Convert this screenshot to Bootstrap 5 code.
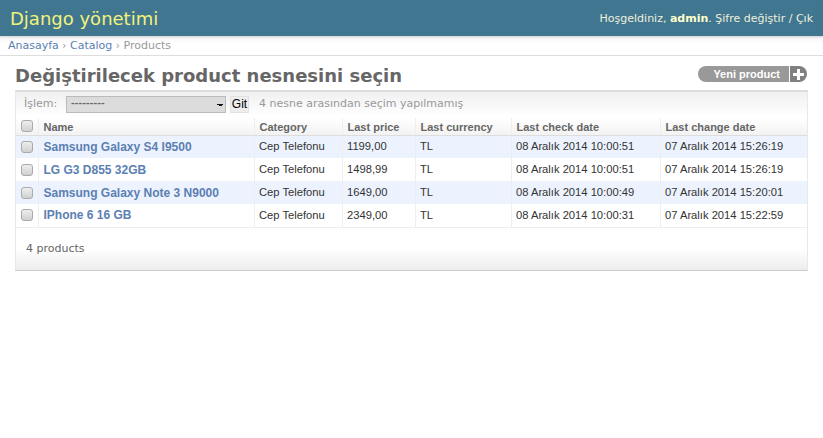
<!DOCTYPE html>
<html lang="tr">
<head>
  <meta charset="UTF-8">
  <meta name="viewport" content="width=device-width, initial-scale=1">
  <title>Değiştirilecek product nesnesini seçin - Django yönetimi</title>
  <link rel="stylesheet" href="https://cdn.jsdelivr.net/npm/bootstrap@5.3.3/dist/css/bootstrap.min.css">
  <style>
    body {
      background-color: #fff;
      color: #333;
      font-family: "DejaVu Sans", sans-serif;
      font-size: 11px;
    }
    a { text-decoration: none; color: #5b80b2; }

    .admin-top {
      height: 36px;
      background: #417690;
      padding: 1px 10px 0 10px;
      box-shadow: 0 1px 2px rgba(0,0,0,.15);
      position: relative;
    }
    .admin-brand { color: #f2f27a; font-size: 18px; font-weight: 400; line-height: 35px; }
    .admin-user { font-size: 11px; color: #eef0dc; padding-top: 2px; }
    .admin-user strong { color: #ffc; }
    .admin-user a { color: #eef0dc; }

    .crumbs {
      height: 20px;
      padding: 0 8px;
      font-size: 11px;
      line-height: 19px;
      color: #999;
      border-bottom: 1px solid #ddd;
      background: linear-gradient(#f4f4f4, #fff 8px);
    }
    .crumbs .sep { font-size: 10.500px; }

    .page-body { padding: 0 15px; }
    .page-head { height: 34px; }
    .page-title { font-size: 18px; font-weight: 700; color: #666; margin: 0 0 3px; }

    .add-link { height: 16px; margin: 0 1px 8px 0; font-family: "Liberation Sans", sans-serif; font-size: 11px; font-weight: 700; color: #fff; line-height: 16px; }
    .add-text { background: #999; width: 91px; padding-right: 9px; text-align: right; border-radius: 8px 0 0 8px; color: #fff; }
    .add-plus { background: #808080; width: 17px; margin-left: 1px; padding-left: 3px; border-radius: 0 8px 8px 0; }

    .result-box { border: 1px solid #e8e8e8; border-top: 2px solid #ddd; border-bottom-color: #ccc; }

    .action-bar {
      height: 26px;
      padding: 0 8px 2px;
      color: #999;
      font-size: 11px;
      background: linear-gradient(#f0f0f0, #fff 24px);
    }
    .action-bar label { width: 42px; }
    .action-pick {
      width: 160px;
      height: 17px;
      padding: 0 4px;
      margin-right: 4px;
      font-family: "DejaVu Sans", sans-serif;
      font-size: 9px;
      font-weight: 700;
      color: #666;
      background-color: #dcdcdc;
      background-image: linear-gradient(45deg, transparent 50%, #111 50%), linear-gradient(-45deg, transparent 50%, #111 50%);
      background-position: right 5px top 7px, right 2px top 7px;
      background-size: 3px 3px;
      background-repeat: no-repeat;
      border: 1px solid #bbb;
      border-radius: 0;
      appearance: none;
    }
    .action-go {
      width: 19px;
      height: 17px;
      padding: 0;
      border: 1px solid #e2e2e2;
      border-radius: 0;
      background: #eee;
      color: #000;
      font-family: "Liberation Sans", sans-serif;
      font-size: 12px;
      line-height: 15px;
    }
    .action-count { margin-left: 10px; }

    .result-table { margin: 0; table-layout: fixed; font-family: "Liberation Sans", sans-serif; font-size: 11.2px; }
    .result-table th, .result-table td { padding: 0 4.500px; vertical-align: middle; border: 0; border-left: 1px solid #eee; box-shadow: none; color: #333; white-space: nowrap; }
    .result-table th:first-child, .result-table td:first-child { border-left: 0; padding: 0 0 0 5px; }
    .result-table thead th { height: 17px; padding-top: 1px; padding-left: 5px; font-size: 11px; line-height: 14px; font-weight: 700; color: #666; background: linear-gradient(#fff, #f2f2f2); border-bottom: 1px solid #ddd; }
    .result-table tbody td { height: 23px; background: #fff; }
    .result-table tbody tr:nth-child(odd) td { background: #edf3fe; }
    .result-table tbody tr:last-child td { border-bottom: 1px solid #eee; }
    .result-table .row-name { padding-left: 5px; font-size: 12px; font-weight: 700; }
    .result-table .row-name a { color: #5b80b2; }
    .tick { appearance: none; display: block; width: 12px; height: 12px; margin: 0; border: 1px solid #aaa; border-radius: 3px; background: linear-gradient(#eee, #d0d0d0); }

    .pager-line { height: 42px; padding: 1px 10px 0; margin: 0; font-size: 11px; color: #666; background: linear-gradient(#fff 20px, #ededed); }
  </style>
</head>
<body>

<header class="admin-top d-flex justify-content-between align-items-center">
  <a class="admin-brand" href="#">Django yönetimi</a>
  <div class="admin-user">Hoşgeldiniz, <strong>admin</strong>. <a href="#">Şifre değiştir</a> / <a href="#">Çık</a></div>
</header>

<nav class="crumbs">
  <a href="#">Anasayfa</a> <span class="sep">›</span> <a href="#">Catalog</a> <span class="sep">›</span> Products
</nav>

<main class="page-body">
  <div class="page-head d-flex justify-content-between align-items-end">
    <h1 class="page-title">Değiştirilecek product nesnesini seçin</h1>
    <a class="add-link d-flex" href="#">
      <span class="add-text">Yeni product</span>
      <span class="add-plus d-flex align-items-center">
        <svg width="11" height="11" viewBox="0 0 11 11"><path d="M4 0h3v4h4v3h-4v4h-3v-4h-4v-3h4z" fill="#fff"/></svg>
      </span>
    </a>
  </div>

  <div class="result-box">
    <div class="action-bar d-flex align-items-center">
      <label>İşlem:</label>
      <select class="action-pick"><option>---------</option></select>
      <button class="action-go" type="button">Git</button>
      <span class="action-count">4 nesne arasından seçim yapılmamış</span>
    </div>

    <table class="table result-table">
      <colgroup>
        <col style="width:22px"><col style="width:216px"><col style="width:88px"><col style="width:73px"><col style="width:96px"><col style="width:149px"><col>
      </colgroup>
      <thead>
        <tr>
          <th><input class="tick" type="checkbox"></th>
          <th>Name</th>
          <th>Category</th>
          <th>Last price</th>
          <th>Last currency</th>
          <th>Last check date</th>
          <th>Last change date</th>
        </tr>
      </thead>
      <tbody id="rows"></tbody>
    </table>

    <p class="pager-line d-flex align-items-center">4 products</p>
  </div>
</main>

<script src="https://cdn.jsdelivr.net/npm/bootstrap@5.3.3/dist/js/bootstrap.bundle.min.js"></script>
<script>
  const products = [
    ['Samsung Galaxy S4 I9500', '1199,00', '10:00:51', '15:26:19'],
    ['LG G3 D855 32GB', '1498,99', '10:00:51', '15:26:19'],
    ['Samsung Galaxy Note 3 N9000', '1649,00', '10:00:49', '15:20:01'],
    ['IPhone 6 16 GB', '2349,00', '10:00:31', '15:22:59']
  ];
  document.getElementById('rows').innerHTML = products.map(p => `
    <tr>
      <td><input class="tick" type="checkbox"></td>
      <td class="row-name"><a href="#">${p[0]}</a></td>
      <td>Cep Telefonu</td>
      <td>${p[1]}</td>
      <td>TL</td>
      <td>08 Aralık 2014 ${p[2]}</td>
      <td>07 Aralık 2014 ${p[3]}</td>
    </tr>`).join('');
</script>

</body>
</html>
